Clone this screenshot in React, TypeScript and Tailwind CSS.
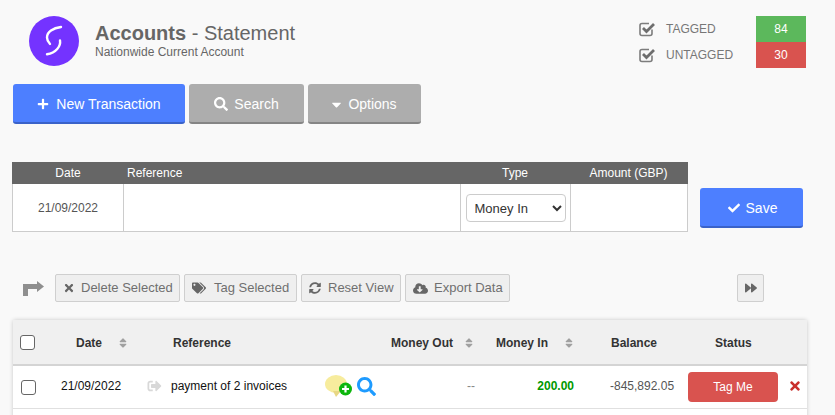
import { FaPlus, FaSearch, FaCaretDown, FaCheck, FaTimes, FaTags, FaSyncAlt, FaCloudDownloadAlt, FaForward, FaSort, FaSignOutAlt } from "react-icons/fa";

function ToolBtn({ icon, label, w, gap }: { icon: React.ReactNode; label: string; w: string; gap: string }) {
  return (
    <button className={`${w} ${gap} h-[28px] flex items-center whitespace-nowrap pl-[7px] border border-[#cfcfcf] rounded-[2px] bg-[#efefef] text-[#6f6f6f] text-[13px]`}>
      {icon}
      <span>{label}</span>
    </button>
  );
}

function Sort() {
  return <FaSort className="text-[#a0a0a0] text-[12px]" />;
}

function Tick() {
  return (
    <svg width="17" height="16" viewBox="0 0 17 16" fill="none" className="shrink-0">
      <path d="M13 8.5V12.5C13 13.6 12.1 14.5 11 14.5H3C1.9 14.5 1 13.6 1 12.5V4.5C1 3.4 1.9 2.5 3 2.5H10" stroke="#7d7d7d" strokeWidth="1.6" />
      <path d="M4 7L7.5 10.5L15 3" stroke="#6e6e6e" strokeWidth="2.8" />
    </svg>
  );
}

export default function App() {
  return (
    <div className="w-[835px] h-[415px] overflow-hidden bg-[#f9f9f9] flex flex-col font-['Liberation_Sans',Arial,sans-serif]">
      <div className="flex shrink-0 h-[84px] pt-4">
        <div className="ml-[29px] w-[50px] h-[50px] rounded-full bg-[#7433ff] flex items-center justify-center shrink-0">
          <svg width="50" height="50" viewBox="0 0 50 50" fill="none">
            <path d="M32 11C24 12 18 16 18 21.5C18 24 19.5 26.5 21 28" stroke="#fff" strokeWidth="2.4" strokeLinecap="round" />
            <path d="M31 24.5C32 30 27 37 18 38.3" stroke="#fff" strokeWidth="2.4" strokeLinecap="round" />
          </svg>
        </div>
        <div className="ml-4 mt-[6px] w-[500px]">
          <div className="text-[20px] leading-[23px] text-[#666]"><span className="font-bold">Accounts</span> - Statement</div>
          <div className="text-[12px] leading-[14px] text-[#666]">Nationwide Current Account</div>
        </div>
        <div className="ml-[44px] w-[167px] flex flex-col">
          <div className="flex items-center h-[26px]">
            <Tick />
            <span className="ml-[10px] w-[90px] text-[12px] text-[#777]">TAGGED</span>
            <span className="w-[50px] h-[26px] bg-[#5cb85c] text-white text-[12px] flex items-center justify-center">84</span>
          </div>
          <div className="flex items-center h-[26px]">
            <Tick />
            <span className="ml-[10px] w-[90px] text-[12px] text-[#777]">UNTAGGED</span>
            <span className="w-[50px] h-[26px] bg-[#d9534f] text-white text-[12px] flex items-center justify-center">30</span>
          </div>
        </div>
      </div>

      <div className="flex shrink-0 ml-[13px] gap-[4px] h-[40px]">
        <button className="w-[172px] h-[40px] pt-[2px] bg-[#4d7fff] border-b-2 border-[#3a62c9] rounded-[3px] text-white text-[14px] flex items-center justify-center gap-[7px]"><FaPlus className="text-[12px]" />New Transaction</button>
        <button className="w-[115px] h-[40px] pt-[2px] bg-[#adadad] border-b-2 border-[#858585] rounded-[3px] text-white text-[14px] flex items-center justify-center gap-[6px]"><FaSearch className="text-[14px]" />Search</button>
        <button className="w-[113px] h-[40px] pt-[2px] pr-[3px] bg-[#adadad] border-b-2 border-[#858585] rounded-[3px] text-white text-[14px] flex items-center justify-center gap-[4px]"><FaCaretDown className="text-[15px]" />Options</button>
      </div>

      <div className="flex shrink-0 ml-[12px] mt-[38px] h-[70px]">
        <div className="w-[676px] h-[70px] grid grid-cols-[112px_337px_110px_117px] grid-rows-[22px_48px] border-r border-b border-[#ccc] bg-white text-[12px]">
          <div className="bg-[#666] text-white flex items-center justify-center">Date</div>
          <div className="bg-[#666] text-white flex items-center pl-[3px]">Reference</div>
          <div className="bg-[#666] text-white flex items-center justify-center pr-[2px]">Type</div>
          <div className="bg-[#666] text-white flex items-center justify-center pr-[2px]">Amount (GBP)</div>
          <div className="border-l border-r border-[#ccc] flex items-center justify-center text-[#555]">21/09/2022</div>
          <div className="border-r border-[#ccc]"></div>
          <div className="border-r border-[#ccc] flex items-center justify-center">
            <select defaultValue="Money In" className="w-[100px] h-[28px] bg-white border border-[#ccc] rounded-[4px] text-[13px] text-[#333] pl-[4px]">
              <option>Money In</option>
            </select>
          </div>
          <div></div>
        </div>
        <button className="ml-[12px] mt-[26px] w-[103px] h-[40px] pt-[2px] pl-[2px] bg-[#4d7fff] border-b-2 border-[#3a62c9] rounded-[3px] text-white text-[14px] flex items-center justify-center gap-[6px]"><FaCheck className="text-[12px]" />Save</button>
      </div>

      <div className="flex shrink-0 items-center ml-[23px] mt-[42px] h-[28px]">
        <svg width="21" height="15" viewBox="0 0 21 15" className="mr-[11px]" fill="#8f8f8f">
          <path d="M14 0L21 5.5L14 11V8H5V15H0V3H14Z" />
        </svg>
        <div className="flex gap-[4px]">
          <ToolBtn w="w-[125px]" gap="gap-[6px]" icon={<FaTimes className="text-[#666] text-[12px]" />} label="Delete Selected" />
          <ToolBtn w="w-[113px]" gap="gap-[8px]" icon={<FaTags className="text-[#666] text-[14px]" />} label="Tag Selected" />
          <ToolBtn w="w-[100px]" gap="gap-[7px]" icon={<FaSyncAlt className="text-[#666] text-[12px]" />} label="Reset View" />
          <ToolBtn w="w-[105px]" gap="gap-[6px]" icon={<FaCloudDownloadAlt className="text-[#666] text-[15px]" />} label="Export Data" />
        </div>
        <button className="ml-[227px] w-[27px] h-[28px] flex items-center justify-center border border-[#cfcfcf] rounded-[2px] bg-[#efefef] text-[#666]"><FaForward className="text-[12px]" /></button>
      </div>

      <div className="shrink-0 ml-[13px] mt-[18px] w-[794px] rounded-t-[2px] shadow-[0_0_4px_rgba(0,0,0,0.2)] bg-white text-[12px]">
        <div className="h-[46px] pt-[2px] bg-[#f0f0f0] border-b-2 border-[#d4d4d4] flex items-center font-bold text-[#333]">
          <input type="checkbox" className="appearance-none w-[15px] h-[15px] ml-[7px] -mt-[2px] border border-[#666] rounded-[3px] bg-white" />
          <span className="ml-[41px] w-[34px]">Date</span>
          <span className="ml-[7px]"><Sort /></span>
          <span className="ml-[44px] w-[218px]">Reference</span>
          <span className="w-[62px]">Money Out</span>
          <span className="ml-[10px]"><Sort /></span>
          <span className="ml-[21px] w-[62px]">Money In</span>
          <span className="ml-[5px]"><Sort /></span>
          <span className="ml-[36px] w-[46px]">Balance</span>
          <span className="ml-[58px]">Status</span>
        </div>
        <div className="h-[43px] border-b border-[#e0e0e0] flex items-center">
          <input type="checkbox" className="appearance-none w-[15px] h-[15px] ml-[8px] border border-[#666] rounded-[3px] bg-white" />
          <span className="ml-[25px] w-[86px] mb-[2px] text-[#111]">21/09/2022</span>
          <FaSignOutAlt className="text-[#d8d8d8] text-[14px] w-[15px] mb-[2px]" />
          <span className="ml-[9px] w-[154px] mb-[2px] text-[#111]">payment of 2 invoices</span>
          <svg width="27" height="22" viewBox="0 0 27 22" className="shrink-0 mb-[2px]">
            <ellipse cx="11" cy="9" rx="11" ry="9" fill="#f7ec9d" />
            <path d="M8 16L11 22L16 16Z" fill="#e8d785" />
            <circle cx="20.5" cy="14" r="6.5" fill="#0db60d" />
            <path d="M20.5 10.5V17.5M17 14H24" stroke="#fff" strokeWidth="2.2" />
          </svg>
          <FaSearch className="text-[#1e9bff] text-[19px] ml-[5px] shrink-0 mb-[2px]" />
          <span className="ml-[31px] w-[68px] mb-[2px] text-right text-[#888]">--</span>
          <span className="ml-[23px] w-[76px] mb-[2px] text-right font-bold text-[#090]">200.00</span>
          <span className="ml-[36px] w-[64px] mb-[2px] text-right text-[#555]">-845,892.05</span>
          <button className="ml-[14px] w-[90px] h-[30px] shrink-0 bg-[#d9534f] rounded-[4px] text-white text-[12px]">Tag Me</button>
          <FaTimes className="ml-[10px] text-[#c9302c] text-[14px] shrink-0 mb-[2px]" />
        </div>
        <div className="h-[20px]"></div>
      </div>
    </div>
  );
}
